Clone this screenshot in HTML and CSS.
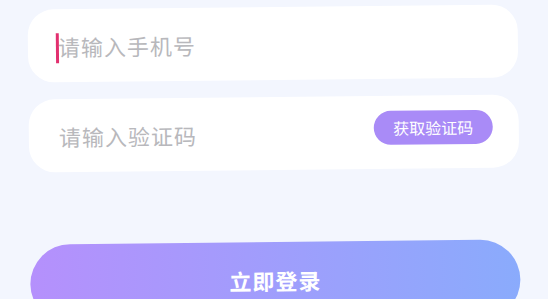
FILE: index.html
```html
<!DOCTYPE html>
<html>
<head>
  <meta charset="UTF-8">
  <title>登录</title>
  <link rel="stylesheet" href="styles.css">
</head>
<body>
  <div class="login-form">
    <div class="field">
      <span class="cursor"></span>
      <span class="placeholder">请输入手机号</span>
    </div>
    <div class="field">
      <span class="placeholder">请输入验证码</span>
      <button class="code-btn">获取验证码</button>
    </div>
    <button class="login-btn">立即登录</button>
  </div>
</body>
</html>
```

FILE: styles.css
```css
body {
  font-family: "Noto Sans CJK SC", "Noto Sans", sans-serif;
  margin: 0;
  background-color: #f3f6fe;
  overflow: hidden;
}
.login-form {
  width: 490px;
  margin: 0 auto;
  padding-top: 7px;
  display: flex;
  flex-direction: column;
  transform: rotate(-0.6deg);
  transform-origin: 245px 150px;
}
.field {
  height: 73px;
  background-color: white;
  border-radius: 26px;
  display: flex;
  align-items: center;
  padding: 0 26px 0 30px;
  margin-bottom: 17px;
  position: relative;
}
.placeholder {
  flex: 1;
  font-size: 22px;
  color: #b8b8bc;
  letter-spacing: 1px;
}
.cursor {
  position: absolute;
  left: 28px;
  top: 24px;
  width: 3px;
  height: 30px;
  background-color: #e2306f;
}
.code-btn {
  background-color: #a98bf7;
  color: white;
  border: none;
  height: 34px;
  width: 119px;
  border-radius: 17px;
  font-family: inherit;
  font-size: 16px;
  margin-bottom: 10px;
  padding: 0;
}
.login-btn {
  margin-top: 55px;
  height: 80px;
  border: none;
  border-radius: 40px;
  background: linear-gradient(90deg, #b590fc, #8aabfc);
  color: white;
  font-family: inherit;
  font-size: 22px;
  font-weight: bold;
  padding: 0 0 4px;
  letter-spacing: 1px;
}
```
